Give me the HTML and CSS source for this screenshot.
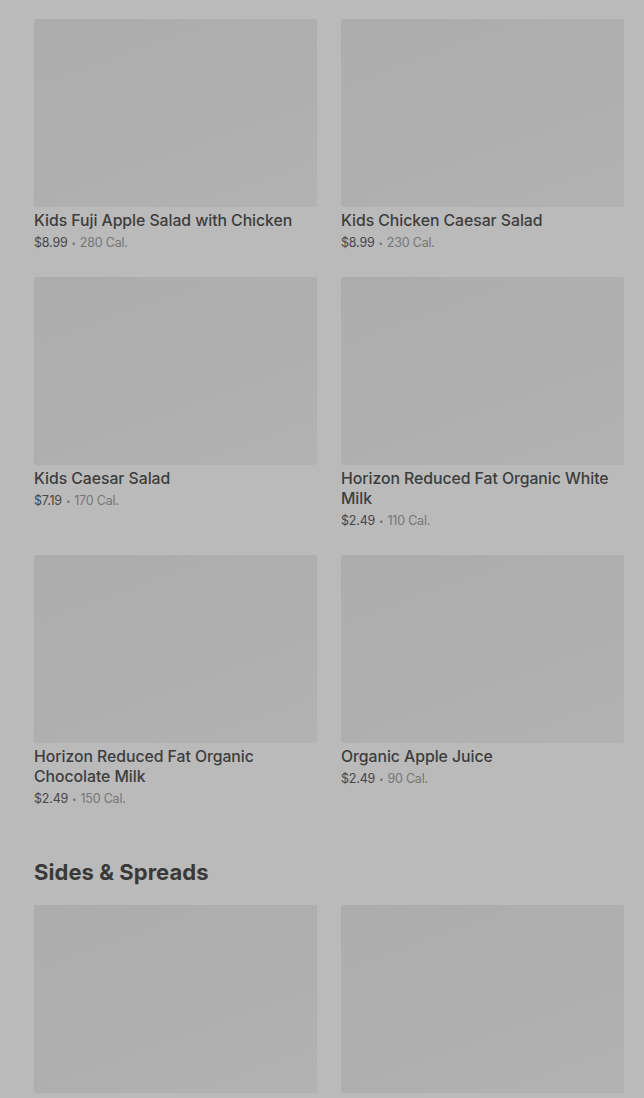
FILE: index.html
```html
<!DOCTYPE html>
<html lang="en">
<head>
    <meta charset="UTF-8">
    <meta name="viewport" content="width=device-width, initial-scale=1.0">
    <title>Menu</title>
    <link rel="stylesheet" href="styles.css">
</head>
<body>
    <!-- Kids menu -->
    <div class="menu-grid">
        <div class="item-card">
            <div class="item-image"></div>
            <div class="item-title">Kids Fuji Apple Salad with Chicken</div>
            <div class="item-meta"><span class="price">$8.99</span><span class="dot">•</span><span class="cal">280 Cal.</span></div>
        </div>
        <div class="item-card">
            <div class="item-image"></div>
            <div class="item-title">Kids Chicken Caesar Salad</div>
            <div class="item-meta"><span class="price">$8.99</span><span class="dot">•</span><span class="cal">230 Cal.</span></div>
        </div>
        <div class="item-card">
            <div class="item-image"></div>
            <div class="item-title">Kids Caesar Salad</div>
            <div class="item-meta"><span class="price">$7.19</span><span class="dot">•</span><span class="cal">170 Cal.</span></div>
        </div>
        <div class="item-card">
            <div class="item-image"></div>
            <div class="item-title">Horizon Reduced Fat Organic White Milk</div>
            <div class="item-meta"><span class="price">$2.49</span><span class="dot">•</span><span class="cal">110 Cal.</span></div>
        </div>
        <div class="item-card">
            <div class="item-image"></div>
            <div class="item-title">Horizon Reduced Fat Organic Chocolate Milk</div>
            <div class="item-meta"><span class="price">$2.49</span><span class="dot">•</span><span class="cal">150 Cal.</span></div>
        </div>
        <div class="item-card">
            <div class="item-image"></div>
            <div class="item-title">Organic Apple Juice</div>
            <div class="item-meta"><span class="price">$2.49</span><span class="dot">•</span><span class="cal">90 Cal.</span></div>
        </div>
    </div>

    <!-- Sides & Spreads -->
    <h2 class="section-title">Sides &amp; Spreads</h2>
    <div class="menu-grid">
        <div class="item-card">
            <div class="item-image"></div>
            <div class="item-title">Mixed Fruit Cup</div>
            <div class="item-meta"><span class="price">$3.99</span><span class="dot">•</span><span class="cal">60 Cal.</span></div>
        </div>
        <div class="item-card">
            <div class="item-image"></div>
            <div class="item-title">Chips</div>
            <div class="item-meta"><span class="price">$1.99</span><span class="dot">•</span><span class="cal">150 Cal.</span></div>
        </div>
    </div>
</body>
</html>
```

FILE: styles.css
```css
/* global */
* {
    margin: 0;
    padding: 0;
    box-sizing: border-box;
}

body {
    font-family: Inter, 'Noto Sans', sans-serif;
    background: #bababa;
    padding: 19px 20px 0 34px;
    overflow: hidden;
}

/* grid of menu items */
.menu-grid {
    display: grid;
    grid-template-columns: 283px 283px;
    column-gap: 24px;
    row-gap: 25px;
}

.item-image {
    height: 188px;
    background: linear-gradient(160deg, #adadad 0%, #afafaf 60%, #b2b2b2 100%);
    border-radius: 2px;
}

.item-title {
    margin-top: 4px;
    font-size: 15.8px;
    line-height: 20px;
    font-weight: 500;
    color: #3d3d3d;
    letter-spacing: -0.05px;
}

.item-meta {
    margin-top: 3px;
    font-size: 12.5px;
    line-height: 18px;
    color: #767676;
    letter-spacing: -0.2px;
}

.item-meta .price {
    color: #474747;
}

.item-meta .dot {
    font-size: 8px;
    margin: 0 4px;
    vertical-align: 1px;
}

/* section heading */
.section-title {
    margin-top: 48px;
    margin-bottom: 17px;
    font-size: 22px;
    line-height: 32px;
    font-weight: 700;
    color: #393939;
    letter-spacing: 0.05px;
}
```
